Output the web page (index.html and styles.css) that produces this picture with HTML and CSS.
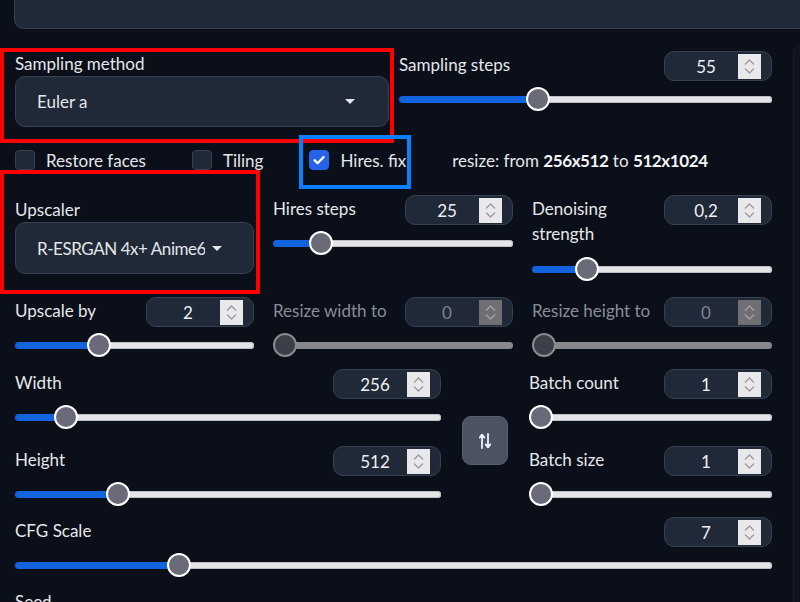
FILE: index.html
```html
<!DOCTYPE html>
<html>
<head>
<meta charset="utf-8">
<title>txt2img settings</title>
<link rel="stylesheet" href="styles.css">
</head>
<body>
<div class="page">
  <div class="topbox"></div>
  <div class="layout">
    <div class="content">

      <div class="row-sampling">
        <div class="field drop-field">
          <div class="mark mark-red mark-sampling"></div>
          <div class="label">Sampling method</div>
          <div class="dropdown"><span class="dd-text">Euler a</span><svg class="caret" width="10" height="5" viewBox="0 0 10 5"><polygon points="0,0 10,0 5,5" fill="#e5e7eb"/></svg></div>
        </div>
        <div class="field slider-field">
          <div class="head"><span class="label">Sampling steps</span>
            <div class="num"><span class="v">55</span><span class="spin"><svg width="23" height="25" viewBox="0 0 23 25"><path d="M7 10.5 L11.5 6 L16 10.5 M7 14.5 L11.5 19 L16 14.5" fill="none" stroke="#9a9aa2" stroke-width="1.3"/></svg></span></div>
          </div>
          <div class="slider" style="--p:0.363"><span class="fill"></span><span class="thumb"></span><span class="rest"></span></div>
        </div>
      </div>

      <div class="checks">
        <label class="check"><span class="box"></span><span>Restore faces</span></label>
        <label class="check"><span class="box"></span><span>Tiling</span></label>
        <label class="check hires"><div class="mark mark-blue"></div><span class="box on"><svg width="20" height="20" viewBox="0 0 20 20"><path d="M5.5 10.2 L8.6 13.2 L14.6 7" fill="none" stroke="#fff" stroke-width="2.3" stroke-linecap="round" stroke-linejoin="round"/></svg></span><span>Hires. fix</span></label>
        <span class="resize">resize: from <b>256x512</b> to <b>512x1024</b></span>
      </div>

      <div class="grid3 row-hires">
        <div class="field drop-field up-field">
          <div class="mark mark-red mark-upscaler"></div>
          <div class="label">Upscaler</div>
          <div class="dropdown"><span class="dd-text">R-ESRGAN 4x+ Anime6B</span><svg class="caret" width="10" height="5" viewBox="0 0 10 5"><polygon points="0,0 10,0 5,5" fill="#e5e7eb"/></svg></div>
        </div>
        <div class="field slider-field">
          <div class="head"><span class="label">Hires steps</span>
            <div class="num"><span class="v">25</span><span class="spin"><svg width="23" height="25" viewBox="0 0 23 25"><path d="M7 10.5 L11.5 6 L16 10.5 M7 14.5 L11.5 19 L16 14.5" fill="none" stroke="#9a9aa2" stroke-width="1.3"/></svg></span></div>
          </div>
          <div class="slider" style="--p:0.165"><span class="fill"></span><span class="thumb"></span><span class="rest"></span></div>
        </div>
        <div class="field slider-field tall">
          <div class="head"><span class="label">Denoising<br>strength</span>
            <div class="num"><span class="v">0,2</span><span class="spin"><svg width="23" height="25" viewBox="0 0 23 25"><path d="M7 10.5 L11.5 6 L16 10.5 M7 14.5 L11.5 19 L16 14.5" fill="none" stroke="#9a9aa2" stroke-width="1.3"/></svg></span></div>
          </div>
          <div class="slider" style="--p:0.2"><span class="fill"></span><span class="thumb"></span><span class="rest"></span></div>
        </div>
      </div>

      <div class="grid3 row-upscale">
        <div class="field slider-field">
          <div class="head"><span class="label">Upscale by</span>
            <div class="num"><span class="v">2</span><span class="spin"><svg width="23" height="25" viewBox="0 0 23 25"><path d="M7 10.5 L11.5 6 L16 10.5 M7 14.5 L11.5 19 L16 14.5" fill="none" stroke="#9a9aa2" stroke-width="1.3"/></svg></span></div>
          </div>
          <div class="slider" style="--p:0.333"><span class="fill"></span><span class="thumb"></span><span class="rest"></span></div>
        </div>
        <div class="field slider-field disabled">
          <div class="head"><span class="label">Resize width to</span>
            <div class="num"><span class="v">0</span><span class="spin"><svg width="23" height="25" viewBox="0 0 23 25"><path d="M7 10.5 L11.5 6 L16 10.5 M7 14.5 L11.5 19 L16 14.5" fill="none" stroke="#a2a2a6" stroke-width="1.3"/></svg></span></div>
          </div>
          <div class="slider" style="--p:0"><span class="fill"></span><span class="thumb"></span><span class="rest"></span></div>
        </div>
        <div class="field slider-field disabled">
          <div class="head"><span class="label">Resize height to</span>
            <div class="num"><span class="v">0</span><span class="spin"><svg width="23" height="25" viewBox="0 0 23 25"><path d="M7 10.5 L11.5 6 L16 10.5 M7 14.5 L11.5 19 L16 14.5" fill="none" stroke="#a2a2a6" stroke-width="1.3"/></svg></span></div>
          </div>
          <div class="slider" style="--p:0"><span class="fill"></span><span class="thumb"></span><span class="rest"></span></div>
        </div>
      </div>

      <div class="dims">
        <div class="col">
          <div class="field slider-field">
            <div class="head"><span class="label">Width</span>
              <div class="num"><span class="v">256</span><span class="spin"><svg width="23" height="25" viewBox="0 0 23 25"><path d="M7 10.5 L11.5 6 L16 10.5 M7 14.5 L11.5 19 L16 14.5" fill="none" stroke="#9a9aa2" stroke-width="1.3"/></svg></span></div>
            </div>
            <div class="slider" style="--p:0.0968"><span class="fill"></span><span class="thumb"></span><span class="rest"></span></div>
          </div>
          <div class="field slider-field second">
            <div class="head"><span class="label">Height</span>
              <div class="num"><span class="v">512</span><span class="spin"><svg width="23" height="25" viewBox="0 0 23 25"><path d="M7 10.5 L11.5 6 L16 10.5 M7 14.5 L11.5 19 L16 14.5" fill="none" stroke="#9a9aa2" stroke-width="1.3"/></svg></span></div>
            </div>
            <div class="slider" style="--p:0.2258"><span class="fill"></span><span class="thumb"></span><span class="rest"></span></div>
          </div>
        </div>
        <button class="swap" type="button"><svg width="12" height="16" viewBox="0 0 12 16"><path d="M3 15 V2 M0.6 4.6 L3 1.6 L5.4 4.6 M9 1 V14 M6.6 11.4 L9 14.4 L11.4 11.4" fill="none" stroke="#eef2fb" stroke-width="1.8" stroke-linecap="round" stroke-linejoin="round"/></svg></button>
        <div class="col">
          <div class="field slider-field">
            <div class="head"><span class="label">Batch count</span>
              <div class="num"><span class="v">1</span><span class="spin"><svg width="23" height="25" viewBox="0 0 23 25"><path d="M7 10.5 L11.5 6 L16 10.5 M7 14.5 L11.5 19 L16 14.5" fill="none" stroke="#9a9aa2" stroke-width="1.3"/></svg></span></div>
            </div>
            <div class="slider" style="--p:0"><span class="fill"></span><span class="thumb"></span><span class="rest"></span></div>
          </div>
          <div class="field slider-field second">
            <div class="head"><span class="label">Batch size</span>
              <div class="num"><span class="v">1</span><span class="spin"><svg width="23" height="25" viewBox="0 0 23 25"><path d="M7 10.5 L11.5 6 L16 10.5 M7 14.5 L11.5 19 L16 14.5" fill="none" stroke="#9a9aa2" stroke-width="1.3"/></svg></span></div>
            </div>
            <div class="slider" style="--p:0"><span class="fill"></span><span class="thumb"></span><span class="rest"></span></div>
          </div>
        </div>
      </div>

      <div class="field slider-field cfg">
        <div class="head"><span class="label">CFG Scale</span>
          <div class="num"><span class="v">7</span><span class="spin"><svg width="23" height="25" viewBox="0 0 23 25"><path d="M7 10.5 L11.5 6 L16 10.5 M7 14.5 L11.5 19 L16 14.5" fill="none" stroke="#9a9aa2" stroke-width="1.3"/></svg></span></div>
        </div>
        <div class="slider" style="--p:0.207"><span class="fill"></span><span class="thumb"></span><span class="rest"></span></div>
      </div>

      <div class="label seed">Seed</div>
    </div>
    <div class="side"></div>
  </div>
</div>
</body>
</html>
```

FILE: styles.css
```css
* { box-sizing: border-box; }
html, body { margin: 0; padding: 0; }
body {
  width: 800px;
  height: 602px;
  overflow: hidden;
  background: #0b0f19;
  color: #e5e7eb;
  font-family: Lato, "Liberation Sans", sans-serif;
  font-size: 17px;
}
.page { padding-left: 14px; }
.topbox {
  height: 29px;
  margin-right: -40px;
  background: #1f2937;
  border: 1px solid #374151;
  border-top: none;
  border-radius: 0 0 0 10px;
}
.layout { display: flex; gap: 21px; margin-top: 14px; padding-left: 1px; }
.content { width: 757px; flex: none; padding-top: 8px; }
.side {
  flex: none;
  width: 60px;
  height: 620px;
  background: #0e131e;
  border: 1px solid #161c28;
  border-radius: 10px 0 0 0;
}

.field { position: relative; }
.label { line-height: 25px; color: #e5e7eb; }

.mark { position: absolute; pointer-events: none; }
.mark-red { border: 4px solid #ff0000; }
.mark-blue { border: 4px solid #0a80ff; }
.mark-sampling { left: -15px; top: -3px; right: -5px; bottom: -16px; }
.mark-upscaler { left: -15px; top: -25px; right: -6px; bottom: -13px; }

.row-sampling {
  display: grid;
  grid-template-columns: 374px 373px;
  column-gap: 10px;
}

.dropdown {
  display: flex;
  align-items: center;
  height: 51px;
  padding: 0 33px 0 21px;
  background: #1f2937;
  border: 1px solid #374151;
  border-radius: 10px;
}
.dd-text { flex: 1; min-width: 0; white-space: nowrap; overflow: hidden; color: #e5e7eb; }
.caret { flex: none; margin-left: 9px; }
.up-field { padding-top: 2px; }
.up-field .dropdown { height: 52px; padding-right: 31px; }
.up-field .dd-text { letter-spacing: -0.45px; }
.up-field .caret { margin-left: 7px; }

.head { display: flex; justify-content: space-between; align-items: flex-start; height: 30px; }
.head .label { padding-top: 1px; }
.tall .head { height: 50px; }
.num {
  flex: none;
  display: flex;
  align-items: center;
  width: 108px;
  height: 30px;
  padding: 0 10px 0 9px;
  background: #1f2937;
  border: 1px solid #374151;
  border-radius: 10px;
}
.num .v { flex: 1; text-align: center; color: #eef0f4; }
.spin { flex: none; width: 23px; height: 25px; background: #e9e9ec; display: block; }
.spin svg { display: block; }

.slider { display: flex; align-items: center; height: 24px; margin-top: 6px; }
.tall .slider { margin-top: 12px; }
.fill {
  flex: none;
  width: calc(12px + (100% - 24px) * var(--p));
  height: 7px;
  background: #1363df;
  border-radius: 4px 0 0 4px;
}
.rest {
  flex: 1;
  height: 7px;
  background: #e4e4e8;
  box-shadow: inset 0 0 0 1px #bdbdc4;
  border-radius: 0 4px 4px 0;
}
.thumb {
  flex: none;
  position: relative;
  z-index: 1;
  width: 24px;
  height: 24px;
  margin: 0 -12px;
  border-radius: 50%;
  background: #6a6a78;
  border: 2px solid #ffffff;
}
.disabled .label { color: #888d96; }
.disabled .num .v { color: #7f848d; }
.disabled .spin { background: #707074; }
.disabled .rest { background: #88888c; box-shadow: none; }
.disabled .thumb { background: #3c3e4a; border-color: #8a8a8e; }

.checks { display: flex; align-items: center; gap: 46px; margin-top: 23px; height: 20px; }
.check { position: relative; display: flex; align-items: center; gap: 11px; color: #e5e7eb; }
.box {
  flex: none;
  width: 20px;
  height: 20px;
  background: #1f2937;
  border: 1px solid #374151;
  border-radius: 4px;
}
.box.on { background: #2563eb; border-color: #2563eb; }
.box svg { display: block; margin: -1px; }
.hires .mark-blue { left: -10px; top: -15px; right: -5px; bottom: -18px; }
.resize { margin-left: 0; color: #e5e7eb; }
.resize b { font-weight: 700; color: #f3f4f6; letter-spacing: -0.4px; }

.grid3 {
  display: grid;
  grid-template-columns: 239px 240px 240px;
  column-gap: 19px;
}
.row-hires { margin-top: 25px; }
.row-upscale { margin-top: 16px; }

.dims {
  display: grid;
  grid-template-columns: 426px 46px 243px;
  column-gap: 21px;
  margin-top: 12px;
}
.second { margin-top: 17px; }
.swap {
  align-self: center;
  margin-top: 6px;
  width: 46px;
  height: 49px;
  padding: 0;
  display: flex;
  align-items: center;
  justify-content: center;
  background: #4b5363;
  border: 1px solid #576070;
  border-radius: 9px;
}
.swap svg { display: block; }
.cfg { margin-top: 11px; }
.seed { margin-top: 12px; }
```
